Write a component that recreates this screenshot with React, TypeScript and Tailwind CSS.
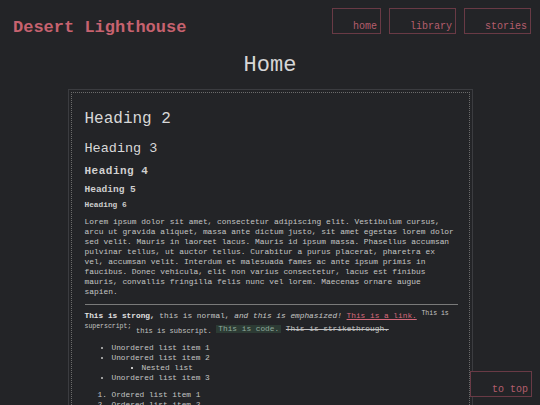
const LOREM =
  'Lorem ipsum dolor sit amet, consectetur adipiscing elit. Vestibulum cursus, arcu ut gravida aliquet, massa ante dictum justo, sit amet egestas lorem dolor sed velit. Mauris in laoreet lacus. Mauris id ipsum massa. Phasellus accumsan pulvinar tellus, ut auctor tellus. Curabitur a purus placerat, pharetra ex vel, accumsan velit. Interdum et malesuada fames ac ante ipsum primis in faucibus. Donec vehicula, elit non varius consectetur, lacus est finibus mauris, convallis fringilla felis nunc vel lorem. Maecenas ornare augue sapien.'

const NAV = ['home', 'library', 'stories']

function NavLink({ label }: { label: string }) {
  return (
    <a
      href="#"
      className="block border border-[#693a45] pl-[20px] pr-[3px] pt-[12px] pb-[1px] text-[10px] leading-[11px] text-[#b55e6d]"
    >
      {label}
    </a>
  )
}

export default function App() {
  return (
    <div className="relative min-h-[405px] h-[405px] overflow-hidden bg-[#232427] font-['Liberation_Mono',monospace] text-[#c4c4c4]">
      {/* Header */}
      <header className="flex items-start justify-between pl-[13px] pr-[9px] pt-[8px]">
        <div className="mt-[9px] text-[17px] leading-[21px] font-bold text-[#c7626f]">Desert Lighthouse</div>
        <nav className="flex gap-[8px]">
          {NAV.map((n) => (
            <NavLink key={n} label={n} />
          ))}
        </nav>
      </header>

      <h1 className="mt-[15px] text-center text-[22px] leading-[26px] text-[#d6d6d6]">Home</h1>

      {/* Content box */}
      <main className="mx-auto mt-[10px] w-[405px] border border-[#3b3c40] p-[2px]">
        <div className="border border-dotted border-[#6b6b6b] pl-[13px] pr-[11px] pt-[16px] pb-6">
          <h2 className="text-[16px] leading-[20px] text-[#d8d8d8]">Heading 2</h2>
          <h3 className="mt-[12px] text-[13.5px] leading-[16px] text-[#d8d8d8]">Heading 3</h3>
          <h4 className="mt-[7px] text-[11px] leading-[14px] font-bold tracking-[0.5px] text-[#d0d0d0]">Heading 4</h4>
          <h5 className="mt-[6px] text-[9.5px] leading-[12px] font-bold text-[#cfcfcf]">Heading 5</h5>
          <h6 className="mt-[4px] text-[7.8px] leading-[10px] font-bold text-[#cfcfcf]">Heading 6</h6>

          <p className="mt-[7px] text-[7.9px] leading-[10px]">{LOREM}</p>

          <hr className="mt-[7px] border-t border-[#7a7a7a]" />

          <p className="mt-[5px] text-[7.8px] leading-[13px]">
            <strong className="font-bold text-[#e0e0e0]">This is strong,</strong> this is normal,{' '}
            <em className="italic">and this is emphasized!</em>{' '}
            <a href="#" className="text-[#d4697b] underline">This is a link.</a>{' '}
            <sup className="text-[6.5px]">This is superscript;</sup>{' '}
            <sub className="text-[7px]">this is subscript.</sub>{' '}
            <code className="bg-[#2c3b34] px-[2px] text-[#8fa99b]">This is code.</code>{' '}
            <s>This is strikethrough.</s>
          </p>

          <ul className="mt-[7px] list-disc pl-[27px] text-[7.8px] leading-[10px]">
            <li>Unordered list item 1</li>
            <li>
              Unordered list item 2
              <ul className="list-[square] pl-[30px]">
                <li>Nested list</li>
              </ul>
            </li>
            <li>Unordered list item 3</li>
          </ul>

          <ol className="mt-[7px] list-decimal pl-[27px] text-[7.8px] leading-[10px]">
            <li>Ordered list item 1</li>
            <li>Ordered list item 2</li>
            <li>Ordered list item 3</li>
          </ol>
        </div>
      </main>

      {/* To top */}
      <a
        href="#"
        className="absolute right-[8px] bottom-[8px] block border border-[#693a45] bg-[#232427] pl-[21px] pr-[3px] pt-[12px] pb-[1px] text-[10px] leading-[11px] text-[#b55e6d]"
      >
        to top
      </a>
    </div>
  )
}
